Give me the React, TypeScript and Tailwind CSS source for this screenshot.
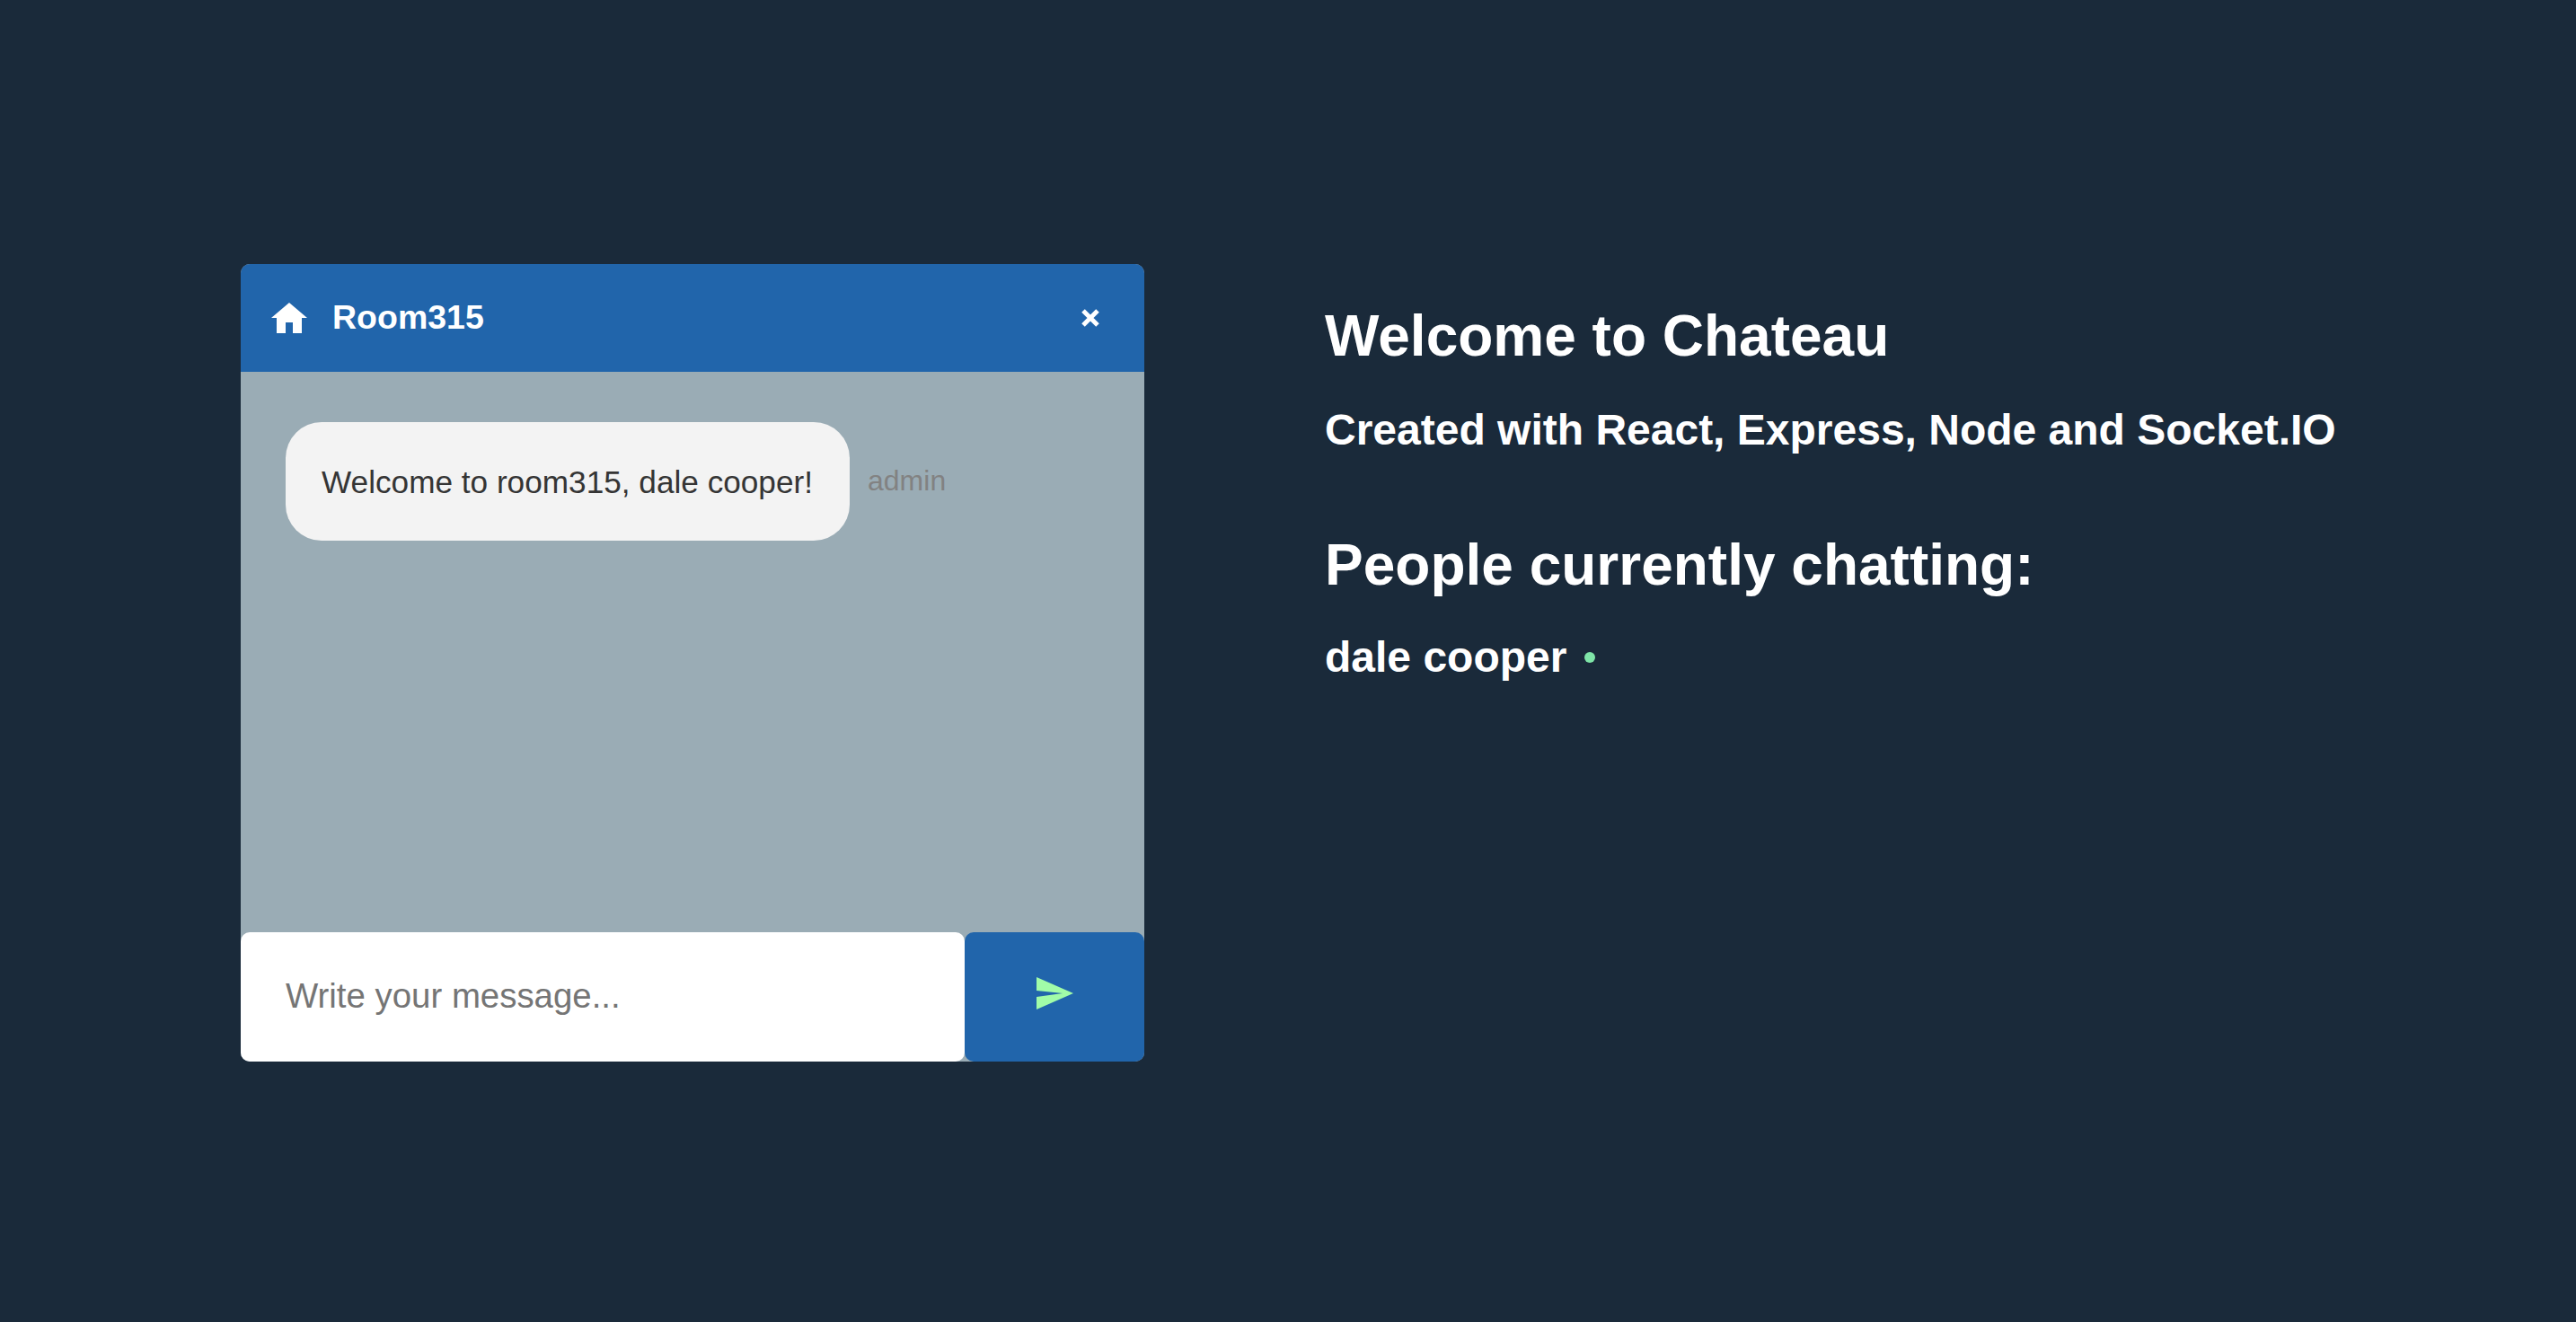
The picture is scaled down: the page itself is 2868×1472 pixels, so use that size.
export default function App() {
  return (
    <div className="flex h-[1472px] w-[2868px] items-start bg-[#1a2a3a] pl-[268px] pt-[294px] font-['Liberation_Sans',sans-serif]">
      <div className="flex h-[888px] w-[1006px] shrink-0 flex-col rounded-[10px] bg-[#9aacb5]">
        <div className="flex h-[120px] shrink-0 items-center justify-between rounded-t-[10px] bg-[#2165ab] pl-[34px] pr-[48px]">
          <div className="flex items-center gap-[28px]">
            <svg width="40" height="34" viewBox="0 0 40 34" className="block">
              <path d="M20 0 L40 17 H34 V34 H24 V22 H16 V34 H6 V17 H0 Z" fill="#ffffff" />
            </svg>
            <span className="text-[37.5px] leading-none font-bold text-white">Room315</span>
          </div>
          <svg width="24" height="24" viewBox="0 0 24 24" className="block">
            <path d="M4 4 L20 20 M20 4 L4 20" stroke="#ffffff" strokeWidth="5" fill="none" />
          </svg>
        </div>
        <div className="flex flex-1 items-start pl-[50px] pt-[56px]">
          <div className="rounded-[40px] bg-[#f3f3f3] pb-[45px] pl-[40px] pr-[41px] pt-[47px] text-[35.2px] leading-[40px] text-[#353535]">
            Welcome to room315, dale cooper!
          </div>
          <span className="ml-[20px] mt-[49px] text-[32px] leading-none text-[#828282]">admin</span>
        </div>
        <div className="flex h-[144px] shrink-0">
          <div className="flex w-[806px] items-center rounded-[10px] bg-white pb-[2px] pl-[50px] text-[38.4px] text-[#757575]">
            Write your message...
          </div>
          <div className="flex w-[200px] items-center justify-center rounded-[10px] bg-[#2165ab] pb-[8px]">
            <svg width="41" height="36" viewBox="0 0 41 36" className="block">
              <path d="M0 0 L41 18 L0 36 L0 22 L29 18 L0 15 Z" fill="#a1fca8" />
            </svg>
          </div>
        </div>
      </div>
      <div className="ml-[201px] flex flex-col pt-[42px] text-white">
        <h1 className="text-[64px] leading-[76px] font-bold">Welcome to Chateau</h1>
        <h2 className="mt-[39px] text-[48px] leading-[56px] font-bold">Created with React, Express, Node and Socket.IO</h2>
        <h1 className="mt-[84px] text-[64px] leading-[76px] font-bold">People currently chatting:</h1>
        <div className="mt-[37px] flex items-center text-[48px] leading-[56px] font-bold">
          dale cooper
          <span className="ml-[20px] h-[12px] w-[12px] rounded-full bg-[#7fe5a8]"></span>
        </div>
      </div>
    </div>
  );
}
